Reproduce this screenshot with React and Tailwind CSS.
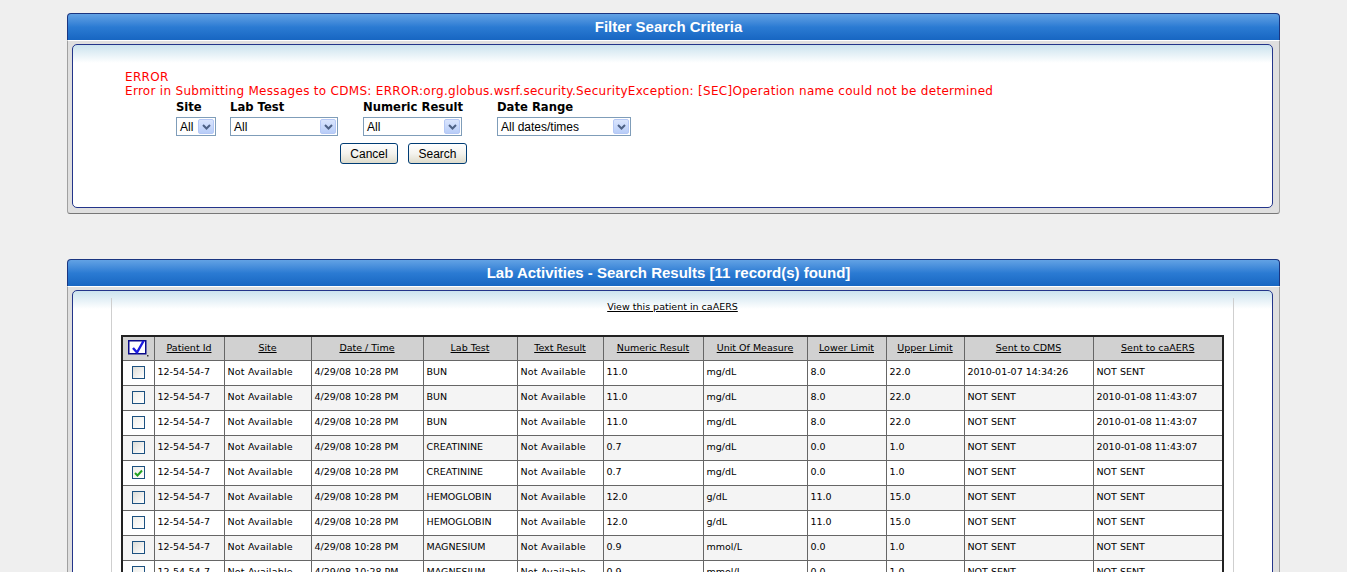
import React from "react";

const rows = [
  ["BUN", "11.0", "mg/dL", "8.0", "22.0", "2010-01-07 14:34:26", "NOT SENT", false, true],
  ["BUN", "11.0", "mg/dL", "8.0", "22.0", "NOT SENT", "2010-01-08 11:43:07", false, false],
  ["BUN", "11.0", "mg/dL", "8.0", "22.0", "NOT SENT", "2010-01-08 11:43:07", false, false],
  ["CREATININE", "0.7", "mg/dL", "0.0", "1.0", "NOT SENT", "2010-01-08 11:43:07", false, true],
  ["CREATININE", "0.7", "mg/dL", "0.0", "1.0", "NOT SENT", "NOT SENT", true, false],
  ["HEMOGLOBIN", "12.0", "g/dL", "11.0", "15.0", "NOT SENT", "NOT SENT", false, true],
  ["HEMOGLOBIN", "12.0", "g/dL", "11.0", "15.0", "NOT SENT", "NOT SENT", false, false],
  ["MAGNESIUM", "0.9", "mmol/L", "0.0", "1.0", "NOT SENT", "NOT SENT", false, true],
  ["MAGNESIUM", "0.9", "mmol/L", "0.0", "1.0", "NOT SENT", "NOT SENT", false, false],
];

const headers = [
  "Patient Id",
  "Site",
  "Date / Time",
  "Lab Test",
  "Text Result",
  "Numeric Result",
  "Unit Of Measure",
  "Lower Limit",
  "Upper Limit",
  "Sent to CDMS",
  "Sent to caAERS",
];

const colWidths = [32, 70, 87, 112, 94, 86, 100, 104, 79, 78, 129, 130];

function PanelHeader({ title }) {
  return (
    <div className="h-[27px] rounded-t-[4px] border border-b-0 border-[#1a3580] bg-gradient-to-b from-[#62a2e4] via-[#2b7bd3] to-[#1766c2] flex items-center justify-center pr-[10px] text-white font-bold text-[15px] font-['Liberation_Sans',Arial,sans-serif]">
      {title}
    </div>
  );
}

function Panel({ title, children, innerClass }) {
  return (
    <div className="w-[1213px] mx-auto">
      <PanelHeader title={title} />
      <div className="border-t border-white bg-[#dfdfdf] border-x border-b border-x-[#a0a0a0] border-b-[#777] rounded-b-[3px] pt-[3px] pl-[4px] pr-[6px] pb-[5px]">
        <div className={"rounded-[5px] border border-[#23358a] bg-white bg-gradient-to-b from-[#cbe3ee] to-white bg-no-repeat bg-[length:100%_18px] " + innerClass}>
          {children}
        </div>
      </div>
    </div>
  );
}

function Select({ value, width }) {
  return (
    <div
      className="h-[19px] border border-[#7f9db9] bg-white flex items-center justify-between pl-[3px] pr-[1px] text-[12px] font-['Liberation_Sans',Arial,sans-serif] text-black"
      style={{ width }}
    >
      <span className="leading-none">{value}</span>
      <span className="w-[16px] h-[15px] rounded-[2px] border border-[#b5c8f5] bg-gradient-to-b from-[#dae5fd] to-[#b8cdf8] flex items-center justify-center">
        <svg width="9" height="6" viewBox="0 0 9 6">
          <path d="M1 1 L4.5 4.5 L8 1" fill="none" stroke="#4d6185" strokeWidth="2" />
        </svg>
      </span>
    </div>
  );
}

function Button({ label, width }) {
  return (
    <div
      className="h-[21px] rounded-[3px] border border-[#003c74] bg-gradient-to-b from-white via-[#f4f3ee] to-[#dedbcb] flex items-center justify-center text-[12px] font-['Liberation_Sans',Arial,sans-serif] text-black"
      style={{ width }}
    >
      {label}
    </div>
  );
}

function CheckBox({ checked, shaded }) {
  return (
    <div
      className={
        "w-[13px] h-[13px] mx-auto border border-[#1c5180] flex items-center justify-center " +
        (shaded ? "bg-gradient-to-br from-[#dcdcd7] to-white" : "bg-gradient-to-br from-[#eeeeea] to-white")
      }
    >
      {checked && (
        <svg width="9" height="8" viewBox="0 0 9 8">
          <path d="M1 4 L3.5 6.5 L8 1.5" fill="none" stroke="#21a121" strokeWidth="2" />
        </svg>
      )}
    </div>
  );
}

function HeaderCheck() {
  return (
    <svg width="21" height="17" viewBox="0 0 21 17" className="mx-auto block">
      <rect x="0.75" y="0.75" width="17" height="13" fill="white" stroke="#0a0a8a" strokeWidth="1.5" />
      <path d="M5 8 L9 12.5 L15.5 1" fill="none" stroke="#1b1be0" strokeWidth="2.4" strokeLinejoin="round" />
      <rect x="19" y="15" width="1.5" height="1.5" fill="#333" />
    </svg>
  );
}

export default function App() {
  return (
    <div className="min-h-screen bg-[#efefef] pt-[13px] font-['DejaVu_Sans',Verdana,sans-serif]">
      <Panel title="Filter Search Criteria" innerClass="h-[164px] pt-[25px] pl-[52px]">
        <div className="text-[#ff0000] text-[12px] leading-[14px] tracking-[0.3px]">
          <div>ERROR</div>
          <div>
            Error in Submitting Messages to CDMS: ERROR:org.globus.wsrf.security.SecurityException: [SEC]Operation name could not be determined
          </div>
        </div>
        <div className="ml-[51px] w-[455px] mt-[2px]">
          <div className="grid grid-cols-[54px_133px_134px_134px] text-black">
            <div className="font-bold text-[11.6px] leading-[14px]">Site</div>
            <div className="font-bold text-[11.6px] leading-[14px]">Lab Test</div>
            <div className="font-bold text-[11.6px] leading-[14px]">Numeric Result</div>
            <div className="font-bold text-[11.6px] leading-[14px]">Date Range</div>
            <div className="mt-[3px]"><Select value="All" width={40} /></div>
            <div className="mt-[3px]"><Select value="All" width={108} /></div>
            <div className="mt-[3px]"><Select value="All" width={99} /></div>
            <div className="mt-[3px]"><Select value="All dates/times" width={134} /></div>
          </div>
          <div className="flex justify-center gap-[10px] mt-[7px]">
            <Button label="Cancel" width={58} />
            <Button label="Search" width={59} />
          </div>
        </div>
      </Panel>

      <div className="h-[45px]" />

      <Panel title="Lab Activities - Search Results [11 record(s) found]" innerClass="pt-[7px] px-[38px] pb-[20px]">
        <div className="border-x border-[#cfcfcf] pt-[3px] pb-[10px]">
          <div className="text-center text-[9.5px] leading-[12px]">
            <span className="underline text-black">View this patient in caAERS</span>
          </div>
          <table className="mt-[22px] mx-auto table-fixed border-collapse border-2 border-[#222] text-[9.5px] text-black" style={{ width: 1101 }}>
            <colgroup>
              {colWidths.map((w, i) => (
                <col key={i} style={{ width: w }} />
              ))}
            </colgroup>
            <thead>
              <tr className="bg-[#d1d1d1] h-[24px]">
                <th className="border border-[#666] p-0 align-middle">
                  <HeaderCheck />
                </th>
                {headers.map((h) => (
                  <th key={h} className="border border-[#666] px-[3px] font-normal text-center align-middle">
                    <span className="underline">{h}</span>
                  </th>
                ))}
              </tr>
            </thead>
            <tbody>
              {rows.map((r, i) => (
                <tr key={i} className={"h-[25px] " + (i % 2 === 1 ? "bg-[#f4f4f4]" : "bg-white")}>
                  <td className="border border-[#666] p-0 align-middle">
                    <CheckBox checked={r[7]} shaded={r[8]} />
                  </td>
                  <td className="border border-[#666] px-[3px] align-middle whitespace-nowrap">12-54-54-7</td>
                  <td className="border border-[#666] px-[3px] align-middle whitespace-nowrap tracking-[0.2px]">Not Available</td>
                  <td className="border border-[#666] px-[3px] align-middle whitespace-nowrap">4/29/08 10:28 PM</td>
                  <td className="border border-[#666] px-[3px] align-middle whitespace-nowrap">{r[0]}</td>
                  <td className="border border-[#666] px-[3px] align-middle whitespace-nowrap tracking-[0.2px]">Not Available</td>
                  <td className="border border-[#666] px-[3px] align-middle whitespace-nowrap">{r[1]}</td>
                  <td className="border border-[#666] px-[3px] align-middle whitespace-nowrap">{r[2]}</td>
                  <td className="border border-[#666] px-[3px] align-middle whitespace-nowrap">{r[3]}</td>
                  <td className="border border-[#666] px-[3px] align-middle whitespace-nowrap">{r[4]}</td>
                  <td className="border border-[#666] px-[3px] align-middle whitespace-nowrap">{r[5]}</td>
                  <td className="border border-[#666] px-[3px] align-middle whitespace-nowrap">{r[6]}</td>
                </tr>
              ))}
            </tbody>
          </table>
        </div>
      </Panel>
    </div>
  );
}
